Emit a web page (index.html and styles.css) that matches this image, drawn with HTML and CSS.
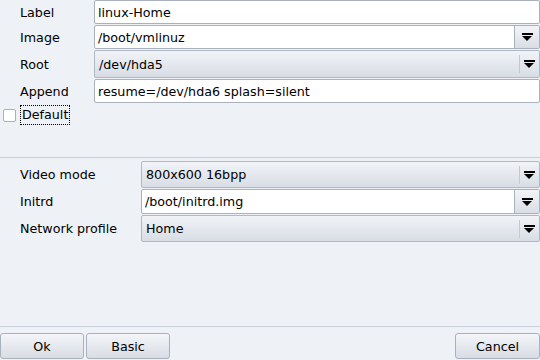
FILE: index.html
```html
<!DOCTYPE html>
<html lang="en">
<head>
  <meta charset="UTF-8" />
  <title>Bootloader entry</title>
  <link rel="stylesheet" href="styles.css">
</head>
<body>

<div class="dialog">
  <div class="grid grid-top">
    <div class="label">Label</div>
    <div class="field entry h24">linux-Home</div>

    <div class="label">Image</div>
    <div class="field combo-edit h24">
      <span class="value">/boot/vmlinuz</span>
      <span class="btn-arrow"><i class="arrow"></i></span>
    </div>

    <div class="label">Root</div>
    <div class="field combo h28">
      <span class="value">/dev/hda5</span>
      <span class="sep"></span>
      <span class="arrow-box"><i class="arrow"></i></span>
    </div>

    <div class="label">Append</div>
    <div class="field entry h24">resume=/dev/hda6 splash=silent</div>
  </div>

  <div class="check-row">
    <span class="checkbox"></span>
    <span class="check-text">Default</span>
  </div>

  <div class="grid grid-bottom">
    <div class="label">Video mode</div>
    <div class="field combo h27">
      <span class="value">800x600 16bpp</span>
      <span class="sep"></span>
      <span class="arrow-box"><i class="arrow"></i></span>
    </div>

    <div class="label">Initrd</div>
    <div class="field combo-edit h25">
      <span class="value">/boot/initrd.img</span>
      <span class="btn-arrow"><i class="arrow"></i></span>
    </div>

    <div class="label">Network profile</div>
    <div class="field combo h27">
      <span class="value">Home</span>
      <span class="sep"></span>
      <span class="arrow-box"><i class="arrow"></i></span>
    </div>
  </div>

  <div class="footer">
    <button class="button">Ok</button>
    <button class="button">Basic</button>
    <button class="button cancel">Cancel</button>
  </div>
</div>

</body>
</html>
```

FILE: styles.css
```css
* {
  margin: 0;
  padding: 0;
  box-sizing: border-box;
}

body {
  width: 540px;
  height: 360px;
  background: #eef1f5;
  font-family: "DejaVu Sans", sans-serif;
  font-size: 12.7px;
  color: #000;
  overflow: hidden;
}

.dialog {
  display: flex;
  flex-direction: column;
  height: 360px;
}

.grid {
  display: grid;
  row-gap: 1px;
  align-items: center;
}

.grid-top {
  grid-template-columns: 94px 1fr;
}

.grid-bottom {
  grid-template-columns: 141px 1fr;
  border-top: 1px solid #c9d0d9;
  margin-top: 32px;
  padding-top: 3px;
}

.label {
  padding-left: 20px;
}

.field {
  display: flex;
  align-items: center;
  border: 1px solid #a9b1bc;
  border-radius: 2px;
}

.h24 { height: 24px; }
.h25 { height: 25px; }
.h27 { height: 27px; }
.h28 { height: 28px; }

.entry {
  background: #fff;
  padding-left: 3px;
}

.combo-edit {
  background: #fff;
}

.combo-edit .value {
  flex: 1;
  padding-left: 3px;
}

.btn-arrow {
  width: 25px;
  height: 100%;
  display: flex;
  align-items: center;
  justify-content: center;
  border-left: 1px solid #a9b1bc;
  background: linear-gradient(#f2f4f7, #d9dee5);
}

.combo {
  background: linear-gradient(#f1f3f7, #d8dde5);
  border-color: #b0b8c3;
}

.combo .value {
  flex: 1;
  padding-left: 4px;
}

.sep {
  width: 1px;
  height: 18px;
  background: #ffffff;
  border-left: 1px solid #c3c9d2;
}

.arrow-box {
  width: 19px;
  display: flex;
  justify-content: center;
}

.arrow {
  display: block;
  width: 11px;
  height: 8px;
  border-top: 2px solid #000;
  position: relative;
}

.arrow::after {
  content: "";
  position: absolute;
  left: 0;
  top: 1px;
  border-left: 5.5px solid transparent;
  border-right: 5.5px solid transparent;
  border-top: 5px solid #000;
}

.check-row {
  display: flex;
  align-items: center;
  height: 20px;
  margin-top: 2px;
  padding-left: 3px;
}

.checkbox {
  width: 13px;
  height: 13px;
  background: #fff;
  border: 1px solid #a9b1bc;
  border-radius: 2px;
}

.check-text {
  margin-left: 4px;
  padding: 1px 1px 2px 1px;
  border: 1px dotted #000;
}

.footer {
  margin-top: auto;
  display: flex;
  gap: 2px;
  border-top: 1px solid #c9d0d9;
  padding-top: 6px;
  padding-bottom: 1px;
}

.button {
  width: 84px;
  height: 26px;
  font-family: "DejaVu Sans", sans-serif;
  font-size: 12.7px;
  color: #000;
  background: linear-gradient(#f3f5f8, #d8dde4);
  border: 1px solid #a9b1bc;
  border-radius: 3px;
}

.cancel {
  width: 85px;
  margin-left: auto;
}
```
